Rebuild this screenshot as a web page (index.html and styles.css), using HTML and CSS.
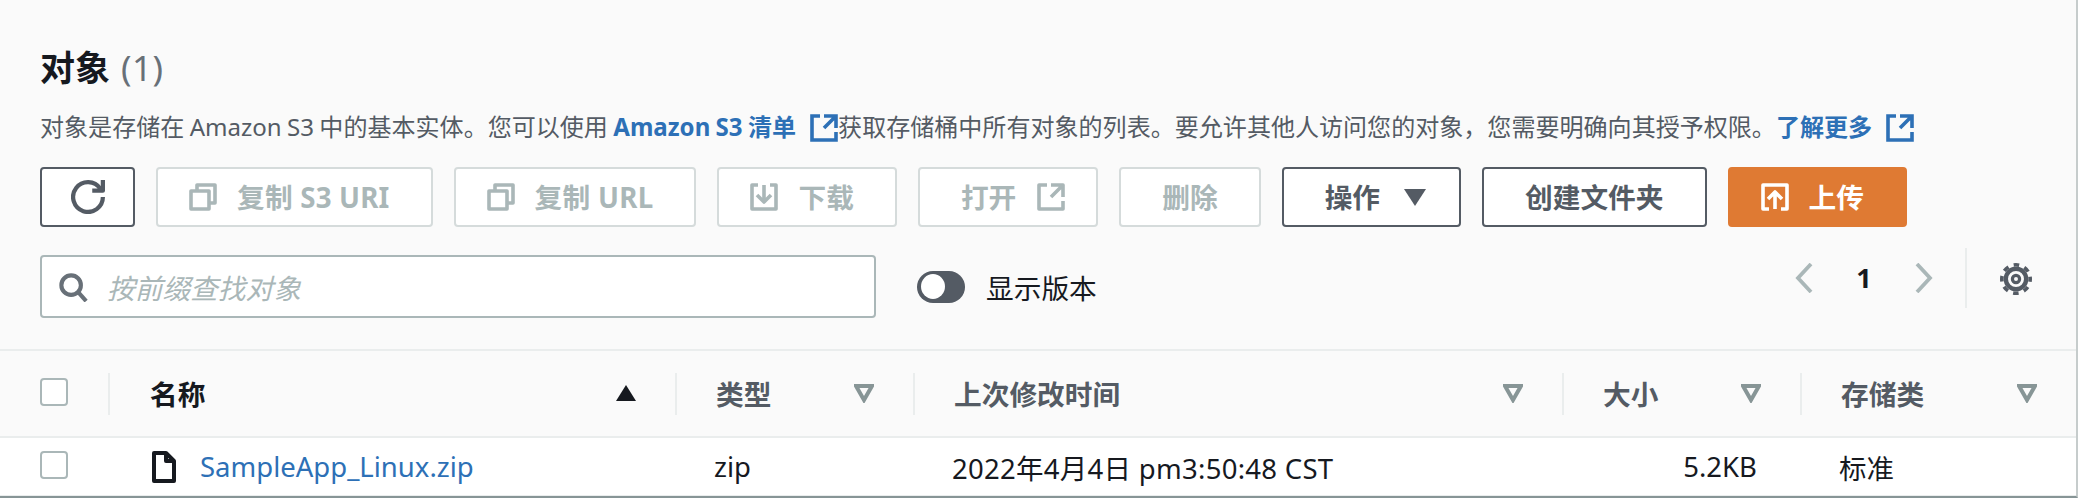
FILE: index.html
```html
<!DOCTYPE html>
<html lang="zh-CN">
<head>
<meta charset="utf-8">
<title>对象</title>
<link rel="stylesheet" href="styles.css">
</head>
<body>
<main class="panel">
  <section class="top">
    <h2 class="title">对象 <span class="count">(1)</span></h2>
    <p class="desc">对象是存储在 Amazon S3 中的基本实体。您可以使用 <a class="link">Amazon S3 清单<svg class="ext" viewBox="1 1 14 14"><path d="M14 8V2H8M14 2 8 8M6 2H2v12h12v-4"/></svg></a>获取存储桶中所有对象的列表。要允许其他人访问您的对象，您需要明确向其授予权限。<a class="link">了解更多<svg class="ext" viewBox="1 1 14 14"><path d="M14 8V2H8M14 2 8 8M6 2H2v12h12v-4"/></svg></a></p>
    <div class="actions">
      <button class="btn refresh"><svg class="ico lg" viewBox="0 0 16 16"><path d="M10 5h5V0"/><path d="M15 8a7 7 0 1 1-1.2-3.9L15 5"/></svg></button>
      <button class="btn off s3"><svg class="ico lead" viewBox="1 1 14 14"><path d="M2 5h9v9H2z"/><path d="M5 5V2h9v9h-3"/></svg>复制 S3 URI</button>
      <button class="btn off url"><svg class="ico lead" viewBox="1 1 14 14"><path d="M2 5h9v9H2z"/><path d="M5 5V2h9v9h-3"/></svg>复制 URL</button>
      <button class="btn off"><svg class="ico lead" viewBox="1 1 14 14"><path d="M5 2H2v12h12V2h-3"/><path d="M8 2v8M4.5 7 8 10.5 11.5 7"/></svg>下载</button>
      <button class="btn off">打开<svg class="ico trail" viewBox="1 1 14 14"><path d="M14 8V2H8M14 2 8 8M6 2H2v12h12v-4"/></svg></button>
      <button class="btn off">删除</button>
      <button class="btn">操作<span class="caret"></span></button>
      <button class="btn">创建文件夹</button>
      <button class="btn primary"><svg class="ico lead" viewBox="1 1 14 14"><path d="M5 14H2V2h12v12h-3"/><path d="M8 14V6M4.5 9 8 5.5 11.5 9"/></svg>上传</button>
    </div>
    <div class="tools">
      <label class="search">
        <svg class="search-ico" viewBox="0 0 16 16"><circle cx="7" cy="7" r="5.2"/><path d="m11 11 4 4.5"/></svg>
        <span class="placeholder">按前缀查找对象</span>
      </label>
      <div class="toggle"><span class="track"><span class="knob"></span></span>显示版本</div>
      <nav class="pager">
        <svg class="chev" viewBox="0 0 18 30"><path d="M16 1 3 15l13 14"/></svg>
        <span class="page">1</span>
        <svg class="chev" viewBox="0 0 18 30"><path d="M2 1l13 14L2 29"/></svg>
      </nav>
      <div class="settings">
        <svg class="gear" viewBox="0 0 16 16"><circle class="gear-teeth" cx="8" cy="8" r="7.1"/><circle class="gear-ring" cx="8" cy="8" r="5.1"/><circle class="gear-hub" cx="8" cy="8" r="1.8"/></svg>
      </div>
    </div>
  </section>
  <section class="table">
    <div class="row head">
      <div class="cell-check"><span class="box"></span></div>
      <div class="th main">名称<span class="sort-up"></span></div>
      <div class="th">类型<svg class="sort" viewBox="0 0 20 20"><path d="M2 3h16l-8 14z"/></svg></div>
      <div class="th">上次修改时间<svg class="sort" viewBox="0 0 20 20"><path d="M2 3h16l-8 14z"/></svg></div>
      <div class="th">大小<svg class="sort" viewBox="0 0 20 20"><path d="M2 3h16l-8 14z"/></svg></div>
      <div class="th">存储类<svg class="sort" viewBox="0 0 20 20"><path d="M2 3h16l-8 14z"/></svg></div>
    </div>
    <div class="row body">
      <div class="cell-check"><span class="box"></span></div>
      <div class="td name"><svg class="file" viewBox="0 0 24 32"><path d="M2 2h12l8 8v20H2zM14 2v8h8"/></svg><a class="file-link">SampleApp_Linux.zip</a></div>
      <div class="td">zip</div>
      <div class="td date">2022年4月4日 pm3:50:48 CST</div>
      <div class="td size">5.2KB</div>
      <div class="td">标准</div>
    </div>
  </section>
</main>
</body>
</html>
```
FILE: styles.css
```css
* { box-sizing: border-box; }
html, body { margin: 0; padding: 0; }
body {
  width: 2078px;
  height: 498px;
  overflow: hidden;
  font-family: "Noto Sans", "Noto Sans CJK SC", sans-serif;
  color: #16191f;
  background: #fafafa;
}
.panel {
  height: 498px;
  display: flex;
  flex-direction: column;
  border-right: 2px solid #c6cccc;
  border-bottom: 2px solid #879596;
}
.top { padding: 0 0 0 40px; height: 349px; display: flex; flex-direction: column; }
.title {
  margin: 45px 0 0;
  font-size: 35px;
  line-height: 46px;
  font-weight: 700;
  color: #16191f;
}
.count { margin-left: 2px; font-weight: 400; letter-spacing: .4px; color: #687078; }
.desc {
  margin: 19px 0 0;
  height: 34px;
  font-size: 24.05px;
  line-height: 34px;
  word-spacing: -.9px;
  color: #545b64;
  white-space: nowrap;
}
.link { color: #2d70b6; font-weight: 700; white-space: nowrap; }
.ext {
  width: 28px;
  height: 28px;
  margin-left: 14px;
  vertical-align: -6px;
  fill: none;
  stroke: #2d70b6;
  stroke-width: 1.8;
}
.actions { display: flex; gap: 21px; margin-top: 23px; }
.btn {
  height: 60px;
  padding: 0 41px;
  display: flex;
  align-items: center;
  background: #fff;
  border: 2px solid #545b64;
  border-radius: 4px;
  color: #545b64;
  font: 700 27.7px/36px "Noto Sans", "Noto Sans CJK SC", sans-serif;
  white-space: nowrap;
}
.btn.refresh { width: 95px; padding: 0; justify-content: center; }
.btn.off { background: #fff; border-color: #d5dbdb; color: #aab7b8; }
.btn.s3 { letter-spacing: .2px; }
.btn.url { letter-spacing: .3px; }
.btn.primary { background: #df7a33; border-color: #df7a33; color: #fff; }
.ico { width: 28px; height: 28px; fill: none; stroke: currentColor; stroke-width: 1.8; stroke-linejoin: round; flex: none; }
.ico.lg { width: 34px; height: 34px; stroke-width: 2; }
.ico.lead { margin-left: -10px; margin-right: 20px; }
.ico.trail { margin-left: 21px; margin-right: -10px; }
.caret {
  width: 0;
  height: 0;
  margin-left: 24px;
  margin-right: -8px;
  border-left: 11px solid transparent;
  border-right: 11px solid transparent;
  border-top: 17px solid #545b64;
}
.tools { display: flex; align-items: center; margin-top: 28px; height: 63px; }
.search {
  width: 836px;
  height: 63px;
  display: flex;
  align-items: center;
  padding-left: 16px;
  background: #fff;
  border: 2px solid #aab7b8;
  border-radius: 4px;
}
.search-ico { width: 30px; height: 30px; fill: none; stroke: #687078; stroke-width: 2.2; flex: none; }
.placeholder { margin-left: 19px; font-size: 27.7px; font-style: italic; color: #aab7b8; }
.toggle { display: flex; align-items: center; margin-left: 41px; font-size: 27.7px; color: #16191f; }
.track {
  width: 48px;
  height: 32px;
  margin-right: 21px;
  border-radius: 16px;
  background: #545b64;
  display: flex;
  align-items: center;
  padding-left: 4px;
}
.knob { width: 24px; height: 25px; border-radius: 50%; background: #fff; }
.pager { display: flex; align-items: center; margin-left: auto; margin-top: -18px; }
.chev { width: 18px; height: 30px; fill: none; stroke: #aab7b8; stroke-width: 3.8; }
.page { width: 102px; text-align: center; font-size: 27px; line-height: 30px; font-weight: 700; color: #16191f; }
.settings {
  width: 111px;
  height: 60px;
  margin-top: -18px;
  margin-left: 32px;
  border-left: 2px solid #eaeded;
  display: flex;
  align-items: center;
  padding: 2px 0 0 33px;
}
.gear { width: 32px; height: 32px; fill: none; stroke: #545b64; }
.gear-teeth { stroke-width: 1.8; stroke-dasharray: 2.8 2.776; stroke-dashoffset: 1.4; }
.gear-ring { stroke-width: 2.2; }
.gear-hub { stroke-width: 1.6; }
.table { flex: 1; display: flex; flex-direction: column; }
.row {
  display: grid;
  grid-template-columns: 108px 567px 238px 649px 238px 276px;
  align-items: center;
}
.head {
  height: 89px;
  background: #fafafa;
  border-top: 2px solid #eaeded;
  border-bottom: 2px solid #eaeded;
}
.body { flex: 1; background: #fff; border-bottom: 1px solid #eaeded; font-size: 27.5px; }
.cell-check { padding-left: 40px; display: flex; }
.head .cell-check { margin-bottom: 4px; }
.body .cell-check { margin-bottom: 3px; }
.box {
  width: 28px;
  height: 28px;
  background: #fff;
  border: 2px solid #aab7b8;
  border-radius: 4px;
}
.th {
  height: 42px;
  padding: 0 39px 2px 39px;
  display: flex;
  align-items: center;
  justify-content: space-between;
  border-left: 2px solid #eaeded;
  font-size: 27.7px;
  font-weight: 700;
  color: #545b64;
}
.th.main { color: #16191f; padding-left: 40px; }
.sort { width: 20px; height: 20px; fill: none; stroke: #879596; stroke-width: 4; flex: none; }
.sort-up {
  width: 0;
  height: 0;
  border-left: 10px solid transparent;
  border-right: 10px solid transparent;
  border-bottom: 16px solid #16191f;
}
.td { padding-left: 39px; white-space: nowrap; color: #16191f; }
.td.date { letter-spacing: .28px; }
.td.name { padding-left: 44px; display: flex; align-items: center; }
.td.size { padding: 0 43px 0 0; text-align: right; }
.file { width: 24px; height: 32px; fill: none; stroke: #16191f; stroke-width: 4; stroke-linejoin: round; flex: none; }
.file-link { margin-left: 24px; color: #2d70b6; }
```
